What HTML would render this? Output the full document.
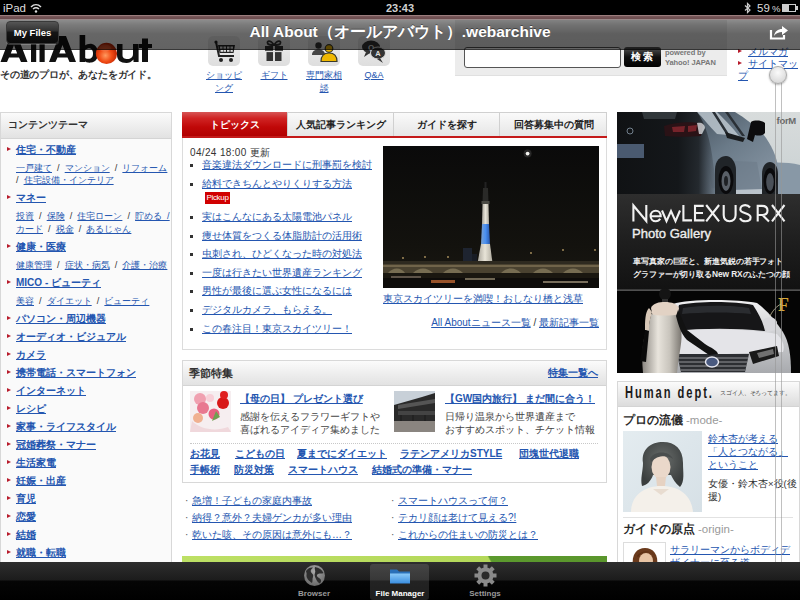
<!DOCTYPE html>
<html><head><meta charset="utf-8">
<style>
*{margin:0;padding:0;box-sizing:border-box}
html,body{width:800px;height:600px;overflow:hidden;background:#fff;font-family:"Liberation Sans",sans-serif;position:relative}
.a{position:absolute;white-space:nowrap}
a,.l{color:#2456b0;text-decoration:underline}
.b{font-weight:bold}
/* status bar */
#status{left:0;top:0;width:800px;height:16px;background:#000;color:#ddd;font-size:12px}
#nav{left:0;top:15px;width:800px;height:34px;background:linear-gradient(#9a8080 0,#8a6c6c 2px,#8d8d8d 4px,#7a7a7a 14px,#6c6c6c 22px,#656565 33px);opacity:0.97}
#tabbar{left:0;top:562px;width:800px;height:38px;background:linear-gradient(#2a2a2a,#151515 18px,#000 19px,#000)}
.box{position:absolute;border:1px solid #d8d8d8;background:#fff}
.hdr{position:absolute;left:0;top:0;right:0;background:linear-gradient(#fbfbfb,#e2e2e2);border-bottom:1px solid #d4d4d4}
.tri{position:absolute;width:0;height:0;border-top:2.5px solid transparent;border-bottom:2.5px solid transparent;border-left:4px solid #b81c2c}
.lc{font-size:11px;line-height:14px}
.lc .b{font-size:11.5px}
.sq{position:absolute;width:3px;height:3px;background:#333}
</style></head><body>

<!-- ===== page content ===== -->
<!-- logo -->
<svg class="a" style="left:0;top:30px" width="160" height="36" viewBox="0 30 160 36">
  <defs><radialGradient id="ball" cx="0.45" cy="0.6" r="0.6"><stop offset="0" stop-color="#ff9a60"/><stop offset="0.5" stop-color="#f04a14"/><stop offset="1" stop-color="#b82000"/></radialGradient></defs>
  <g fill="#111">
    <path d="M0.5 62 L10.5 36 L17.5 36 L27.5 62 L21 62 L19 57.5 L9 57.5 L7 62 Z M10.8 53.5 L17.2 53.5 L14 45 Z" fill-rule="evenodd"/>
    <rect x="31" y="35" width="5.2" height="27"/>
    <rect x="39.5" y="35" width="5.2" height="27"/>
    <path d="M49 62 L59 36 L66 36 L76 62 L69.5 62 L67.5 57.5 L57.5 57.5 L55.5 62 Z M59.3 53.5 L65.7 53.5 L62.5 45 Z" fill-rule="evenodd"/>
    <rect x="79.6" y="35" width="5.6" height="27"/>
    <path d="M84 46 C87 44 90 43.5 92 44 C96 45 98 49 98 53.5 C98 58 96 62 91 62.6 C88 63 86 62 84 61 Z M85 50 L85 58 C87 59 89 59 90.5 58.5 C92.5 57.5 93 55.5 93 53.5 C93 51.5 92.5 49.5 90.5 48.5 C89 48 87 48.5 85 50Z" fill-rule="evenodd"/>
    <path d="M117 44 L122.5 44 L122.5 55 C122.5 58 124.5 59 127.5 59 C130.5 59 133 57.5 133 54 L133 44 L138.6 44 L138.6 62 L133.5 62 L133.5 59.5 C131.5 62 129 63 126.5 63 C120.5 63 117 60 117 55 Z"/>
    <path d="M142 38.4 L148 38.4 L148 44 L152 44 L152 48 L148 48 L148 62 L142 62 L142 48 L139 48 L139 44 L142 44Z"/>
  </g>
  <circle cx="106.5" cy="53.4" r="10.6" fill="url(#ball)"/>
  <ellipse cx="105" cy="48" rx="6" ry="3.5" fill="#fff" opacity="0.12"/>
</svg>
<div class="a b" style="left:0;top:68px;font-size:10px;color:#333;letter-spacing:-0.2px">その道のプロが、あなたをガイド。</div>


<!-- header icons -->
<div class="a" style="left:208px;top:36px;width:32px;height:30px;border-radius:5px;background:linear-gradient(#eeeeee,#dedede)"></div>
<div class="a" style="left:258px;top:36px;width:32px;height:30px;border-radius:5px;background:linear-gradient(#eeeeee,#dedede)"></div>
<div class="a" style="left:308px;top:36px;width:32px;height:30px;border-radius:5px;background:linear-gradient(#eeeeee,#dedede)"></div>
<div class="a" style="left:358px;top:36px;width:32px;height:30px;border-radius:5px;background:linear-gradient(#eeeeee,#dedede)"></div>
<!-- cart -->
<svg class="a" style="left:208px;top:36px" width="32" height="30" viewBox="0 0 32 30">
  <circle cx="8" cy="6" r="1.6" fill="#222"/>
  <path d="M8 6 L11 20 L26 20" stroke="#222" stroke-width="2" fill="none"/>
  <path d="M10 9 L27 9 L25.5 17 L11.5 17 Z" fill="#222"/>
  <g fill="#ddd"><rect x="12" y="10.5" width="2.5" height="2.2"/><rect x="15.5" y="10.5" width="2.5" height="2.2"/><rect x="19" y="10.5" width="2.5" height="2.2"/><rect x="22.5" y="10.5" width="2.5" height="2.2"/>
  <rect x="12.5" y="13.8" width="2.5" height="2"/><rect x="15.5" y="13.8" width="2.5" height="2"/><rect x="19" y="13.8" width="2.5" height="2"/><rect x="22.5" y="13.8" width="2.3" height="2"/></g>
  <circle cx="13" cy="24" r="2" fill="#222"/><circle cx="23" cy="24" r="2" fill="#222"/>
</svg>
<!-- gift -->
<svg class="a" style="left:258px;top:36px" width="32" height="30" viewBox="0 0 32 30">
  <path d="M16 9 C12 3 8 5 10 8 C11 9 14 9 16 9 C18 9 21 9 22 8 C24 5 20 3 16 9Z" fill="none" stroke="#333" stroke-width="1.8"/>
  <rect x="7" y="10" width="18" height="5" fill="#333"/>
  <rect x="8.5" y="16" width="15" height="9" fill="#333"/>
  <rect x="15" y="10" width="2" height="15" fill="#ddd"/>
  <rect x="7" y="14.8" width="18" height="1.3" fill="#ddd"/>
</svg>
<!-- people -->
<svg class="a" style="left:308px;top:36px" width="32" height="30" viewBox="0 0 32 30">
  <circle cx="10.5" cy="9.5" r="3.2" fill="#333"/>
  <path d="M4 19 C4 15 7 13.5 10.5 13.5 C14 13.5 17 15 17 19Z" fill="#444"/>
  <circle cx="21" cy="12.5" r="3.8" fill="#f0b800" stroke="#3a3a2a" stroke-width="1.2"/>
  <path d="M13 25.5 C13 20 16 17 21 17 C26 17 29 20 29 25.5Z" fill="#f0b800" stroke="#3a3a2a" stroke-width="1.2"/>
</svg>
<!-- Q&A -->
<svg class="a" style="left:358px;top:36px" width="32" height="30" viewBox="0 0 32 30">
  <ellipse cx="13" cy="11" rx="9" ry="6.5" fill="#333"/>
  <path d="M8 16 L6 21 L12 17Z" fill="#333"/>
  <text x="13" y="14" font-size="8" font-weight="bold" fill="#ddd" text-anchor="middle" font-family="Liberation Sans">Q</text>
  <ellipse cx="20" cy="17" rx="7.5" ry="6" fill="#333" stroke="#ddd" stroke-width="1"/>
  <path d="M22 22 L25 27 L19 23Z" fill="#333"/>
  <text x="20" y="20" font-size="7.5" font-weight="bold" fill="#ddd" text-anchor="middle" font-family="Liberation Sans">A</text>
</svg>
<div class="a l" style="left:204px;top:69px;width:40px;text-align:center;font-size:9px;line-height:13px;white-space:normal">ショッピ<br>ング</div>
<div class="a l" style="left:254px;top:69px;width:40px;text-align:center;font-size:9px;line-height:13px">ギフト</div>
<div class="a l" style="left:304px;top:69px;width:40px;text-align:center;font-size:9px;line-height:13px;white-space:normal">専門家相<br>談</div>
<div class="a l" style="left:354px;top:69px;width:40px;text-align:center;font-size:9px;line-height:13px">Q&amp;A</div>

<!-- search panel -->
<div class="a" style="left:455px;top:20px;width:272px;height:56px;background:#ececec;border-bottom:1px solid #e0e0e0"></div>
<div class="a" style="left:464px;top:47px;width:157px;height:21px;background:#fff;border:1px solid #555;border-radius:3px"></div>
<div class="a b" style="left:624px;top:47px;width:37px;height:20px;background:linear-gradient(#555,#111 50%,#000);border-radius:3px;color:#fff;font-size:10px;line-height:20px;text-align:center;letter-spacing:2px">検索</div>
<div class="a b" style="left:665px;top:48px;font-size:7.5px;line-height:10px;color:#777;letter-spacing:-0.1px">powered by<br>Yahoo! JAPAN</div>
<!-- side links -->
<div class="tri" style="left:738px;top:49px"></div>
<div class="a l" style="left:748px;top:45px;font-size:9.5px;line-height:13px">メルマガ</div>
<div class="tri" style="left:738px;top:61px"></div>
<div class="a l" style="left:748px;top:57px;font-size:9.5px;line-height:13px">サイトマッ</div>
<div class="a l" style="left:738px;top:69px;font-size:9.5px;line-height:13px">プ</div>

<!-- left sidebar -->
<div class="box" style="left:0;top:112px;width:172px;height:460px;background:#fafafa;border-color:#d8d8d8"><div class="hdr" style="height:26px"></div></div>
<div class="a b" style="left:8px;top:118px;font-size:10px;line-height:14px;color:#333">コンテンツテーマ</div>
<div class="tri" style="left:7px;top:147px"></div>
<div class="a l b" style="left:16px;top:143px;font-size:10px;line-height:14px">住宅・不動産</div>
<div class="a" style="left:16px;top:161px;font-size:9.2px;line-height:14px;color:#333;word-spacing:2.5px"><span class="l">一戸建て</span> <span style="color:#333">/</span> <span class="l">マンション</span> <span style="color:#333">/</span> <span class="l">リフォーム</span></div>
<div class="a" style="left:16px;top:173px;font-size:9.2px;line-height:14px;color:#333;word-spacing:2.5px"><span style="color:#333">/ </span><span class="l">住宅設備・インテリア</span></div>
<div class="tri" style="left:7px;top:195px"></div>
<div class="a l b" style="left:16px;top:191px;font-size:10px;line-height:14px">マネー</div>
<div class="a" style="left:16px;top:209px;font-size:9.2px;line-height:14px;color:#333;word-spacing:2.5px"><span class="l">投資</span> <span style="color:#333">/</span> <span class="l">保険</span> <span style="color:#333">/</span> <span class="l">住宅ローン</span> <span style="color:#333">/</span> <span class="l">貯める /</span></div>
<div class="a" style="left:16px;top:222px;font-size:9.2px;line-height:14px;color:#333;word-spacing:2.5px"><span class="l">カード</span> <span style="color:#333">/</span> <span class="l">税金</span> <span style="color:#333">/</span> <span class="l">あるじゃん</span></div>
<div class="tri" style="left:7px;top:244px"></div>
<div class="a l b" style="left:16px;top:240px;font-size:10px;line-height:14px">健康・医療</div>
<div class="a" style="left:16px;top:258px;font-size:9.2px;line-height:14px;color:#333;word-spacing:2.5px"><span class="l">健康管理</span> <span style="color:#333">/</span> <span class="l">症状・病気</span> <span style="color:#333">/</span> <span class="l">介護・治療</span></div>
<div class="tri" style="left:7px;top:280px"></div>
<div class="a l b" style="left:16px;top:276px;font-size:10px;line-height:14px">MICO - ビューティ</div>
<div class="a" style="left:16px;top:294px;font-size:9.2px;line-height:14px;color:#333;word-spacing:2.5px"><span class="l">美容</span> <span style="color:#333">/</span> <span class="l">ダイエット</span> <span style="color:#333">/</span> <span class="l">ビューティ</span></div>
<div class="tri" style="left:7px;top:316px"></div>
<div class="a l b" style="left:16px;top:312px;font-size:10px;line-height:14px">パソコン・周辺機器</div>
<div class="tri" style="left:7px;top:334px"></div>
<div class="a l b" style="left:16px;top:330px;font-size:10px;line-height:14px">オーディオ・ビジュアル</div>
<div class="tri" style="left:7px;top:352px"></div>
<div class="a l b" style="left:16px;top:348px;font-size:10px;line-height:14px">カメラ</div>
<div class="tri" style="left:7px;top:370px"></div>
<div class="a l b" style="left:16px;top:366px;font-size:10px;line-height:14px">携帯電話・スマートフォン</div>
<div class="tri" style="left:7px;top:388px"></div>
<div class="a l b" style="left:16px;top:384px;font-size:10px;line-height:14px">インターネット</div>
<div class="tri" style="left:7px;top:406px"></div>
<div class="a l b" style="left:16px;top:402px;font-size:10px;line-height:14px">レシピ</div>
<div class="tri" style="left:7px;top:424px"></div>
<div class="a l b" style="left:16px;top:420px;font-size:10px;line-height:14px">家事・ライフスタイル</div>
<div class="tri" style="left:7px;top:442px"></div>
<div class="a l b" style="left:16px;top:438px;font-size:10px;line-height:14px">冠婚葬祭・マナー</div>
<div class="tri" style="left:7px;top:460px"></div>
<div class="a l b" style="left:16px;top:456px;font-size:10px;line-height:14px">生活家電</div>
<div class="tri" style="left:7px;top:478px"></div>
<div class="a l b" style="left:16px;top:474px;font-size:10px;line-height:14px">妊娠・出産</div>
<div class="tri" style="left:7px;top:496px"></div>
<div class="a l b" style="left:16px;top:492px;font-size:10px;line-height:14px">育児</div>
<div class="tri" style="left:7px;top:514px"></div>
<div class="a l b" style="left:16px;top:510px;font-size:10px;line-height:14px">恋愛</div>
<div class="tri" style="left:7px;top:532px"></div>
<div class="a l b" style="left:16px;top:528px;font-size:10px;line-height:14px">結婚</div>
<div class="tri" style="left:7px;top:550px"></div>
<div class="a l b" style="left:16px;top:546px;font-size:10px;line-height:14px">就職・転職</div>
<!-- main topics box -->
<div class="box" style="left:182px;top:112px;width:425px;height:238px;border-color:#dcdcdc"></div>
<div class="a" style="left:182px;top:112px;width:425px;height:24px;background:linear-gradient(#fafafa,#e6e6e6);border:1px solid #d0d0d0;border-bottom:none"></div>
<div class="a b" style="left:182px;top:112px;width:105px;height:25px;background:linear-gradient(#d65656 0,#d02424 25%,#c00808 60%,#b00000 100%);color:#fff;font-size:10px;line-height:25px;text-align:center">トピックス</div>
<div class="a" style="left:287px;top:112px;width:1px;height:24px;background:#d0d0d0"></div>
<div class="a b" style="left:288px;top:112px;width:105px;height:24px;color:#222;font-size:10px;line-height:25px;text-align:center">人気記事ランキング</div>
<div class="a" style="left:393px;top:112px;width:1px;height:24px;background:#d0d0d0"></div>
<div class="a b" style="left:394px;top:112px;width:106px;height:24px;color:#222;font-size:10px;line-height:25px;text-align:center">ガイドを探す</div>
<div class="a" style="left:499px;top:112px;width:1px;height:24px;background:#d0d0d0"></div>
<div class="a b" style="left:500px;top:112px;width:107px;height:24px;color:#222;font-size:10px;line-height:25px;text-align:center">回答募集中の質問</div>
<div class="a" style="left:182px;top:136px;width:425px;height:2px;background:#c41a1a"></div>
<div class="a" style="left:190px;top:146px;font-size:10px;line-height:13px;color:#333;letter-spacing:0.35px">04/24 18:00 更新</div>

<div class="sq" style="left:190px;top:164px"></div>
<div class="a l" style="left:202px;top:158px;font-size:10px;line-height:14px">音楽違法ダウンロードに刑事罰を検討</div>
<div class="sq" style="left:190px;top:183px"></div>
<div class="a l" style="left:202px;top:177px;font-size:10px;line-height:14px">給料できちんとやりくりする方法</div>
<div class="sq" style="left:190px;top:216px"></div>
<div class="a l" style="left:202px;top:210px;font-size:10px;line-height:14px">実はこんなにある太陽電池パネル</div>
<div class="sq" style="left:190px;top:235px"></div>
<div class="a l" style="left:202px;top:229px;font-size:10px;line-height:14px">痩せ体質をつくる体脂肪計の活用術</div>
<div class="sq" style="left:190px;top:253px"></div>
<div class="a l" style="left:202px;top:247px;font-size:10px;line-height:14px">虫刺され、ひどくなった時の対処法</div>
<div class="sq" style="left:190px;top:272px"></div>
<div class="a l" style="left:202px;top:266px;font-size:10px;line-height:14px">一度は行きたい世界遺産ランキング</div>
<div class="sq" style="left:190px;top:290px"></div>
<div class="a l" style="left:202px;top:284px;font-size:10px;line-height:14px">男性が最後に選ぶ女性になるには</div>
<div class="sq" style="left:190px;top:309px"></div>
<div class="a l" style="left:202px;top:303px;font-size:10px;line-height:14px">デジタルカメラ、もらえる。</div>
<div class="sq" style="left:190px;top:328px"></div>
<div class="a l" style="left:202px;top:322px;font-size:10px;line-height:14px">この春注目！東京スカイツリー！</div>
<div class="a" style="left:205px;top:192px;width:25px;height:12px;background:#d10000;color:#fff;font-size:8px;line-height:12px;text-align:center;letter-spacing:-0.3px">Pickup</div>
<!-- skytree photo -->
<svg class="a" style="left:383px;top:146px" width="216" height="142" viewBox="0 0 216 142">
  <defs>
    <linearGradient id="sky" x1="0" y1="0" x2="0" y2="1"><stop offset="0" stop-color="#0a0a0a"/><stop offset="0.7" stop-color="#13120e"/><stop offset="1" stop-color="#1a1812"/></linearGradient>
    <linearGradient id="tw" x1="0" y1="0" x2="1" y2="0"><stop offset="0" stop-color="#7aa0d0"/><stop offset="0.5" stop-color="#4a90f0"/><stop offset="1" stop-color="#2a5ab0"/></linearGradient>
    <linearGradient id="twl" x1="0" y1="0" x2="1" y2="0"><stop offset="0" stop-color="#a8a49a"/><stop offset="0.5" stop-color="#e8e4d8"/><stop offset="1" stop-color="#b0aca0"/></linearGradient>
  </defs>
  <rect width="216" height="142" fill="url(#sky)"/>
  <circle cx="144.6" cy="7.6" r="4" fill="#fff" opacity="0.12"/>
  <circle cx="144.6" cy="7.6" r="1.9" fill="#f4f4f0"/>
  <rect x="101.5" y="36" width="2" height="6" fill="#222"/>
  <path d="M100 42 L105 42 L105.5 56 L99.5 56 Z" fill="#2a2a28"/>
  <rect x="98.5" y="55" width="8" height="3" fill="#4a4a44"/>
  <path d="M99.5 58 L105.5 58 L106 78 L99 78Z" fill="url(#twl)"/>
  <path d="M99 78 L106 78 L107 98 L98 98Z" fill="url(#tw)"/>
  <path d="M98 98 L107 98 L109.5 117 L94.5 117Z" fill="url(#twl)"/>
  <rect x="80" y="102" width="9" height="15" fill="#1e2430"/>
  <rect x="89" y="108" width="5" height="9" fill="#181c24"/>
  <rect x="0" y="115" width="216" height="4" fill="#2e2a20"/>
  <rect x="0" y="118" width="216" height="9" fill="#4a4230"/>
  <rect x="0" y="119" width="216" height="2" fill="#8a7c5c" opacity="0.6"/>
  <g fill="#e0d0a0" opacity="0.3">
    <path d="M5 127 C10 121 18 121 22 127Z"/><path d="M30 127 C36 121 44 121 50 127Z"/><path d="M60 127 C66 121 74 121 80 127Z"/><path d="M118 127 C124 121 132 121 138 127Z"/><path d="M150 127 C156 121 164 121 170 127Z"/><path d="M180 127 C186 121 194 121 200 127Z"/>
  </g>
  <rect x="0" y="127" width="216" height="5" fill="#1a1710"/>
  <rect x="0" y="132" width="216" height="10" fill="#0e0c0a"/>
  <rect x="48" y="134" width="24" height="3" fill="#b06030" opacity="0.85"/>
  <rect x="82" y="132" width="30" height="2" fill="#c0b090" opacity="0.55"/>
  <rect x="160" y="135" width="45" height="2" fill="#d0c0a0" opacity="0.55"/>
  <rect x="8" y="130" width="30" height="2" fill="#a09080" opacity="0.5"/>
  <g fill="#d8b878" opacity="0.8"><circle cx="20" cy="112" r="0.9"/><circle cx="42" cy="111" r="0.9"/><circle cx="65" cy="111" r="0.9"/><circle cx="148" cy="107" r="0.9"/><circle cx="180" cy="104" r="0.9"/><circle cx="212" cy="104" r="0.9"/></g>
</svg>
<div class="a l" style="left:383px;top:292px;font-size:10px;line-height:14px">東京スカイツリーを満喫！おしなり橋と浅草</div>
<div class="a" style="left:383px;top:316px;width:216px;text-align:right;font-size:10px;line-height:14px;color:#333"><span class="l">All Aboutニュース一覧</span> / <span class="l">最新記事一覧</span></div>

<!-- seasonal box -->
<div class="box" style="left:182px;top:360px;width:425px;height:123px;border-color:#d8d8d8"><div class="hdr" style="height:25px"></div></div>
<div class="a b" style="left:189px;top:366px;font-size:11px;line-height:14px;color:#333">季節特集</div>
<div class="a l b" style="left:598px;top:366px;transform:translateX(-100%);font-size:10px;line-height:14px">特集一覧へ</div>
<svg class="a" style="left:190px;top:391px" width="41" height="41" viewBox="0 0 41 41">
  <rect width="41" height="41" fill="#f6eef0"/>
  <path d="M2 30 C10 38 25 41 38 36 L41 41 L0 41Z" fill="#f0d8dc"/>
  <circle cx="10" cy="8" r="6" fill="#f0a0b0"/><circle cx="13" cy="17" r="6" fill="#e87890"/>
  <circle cx="24" cy="23" r="5.5" fill="#e86080"/><circle cx="33" cy="12" r="6" fill="#d81818"/>
  <circle cx="34" cy="4" r="4" fill="#e02020"/><circle cx="8" cy="27" r="5" fill="#f0b090"/>
  <circle cx="20" cy="7" r="4" fill="#f8d0d8"/><path d="M26 20 L30 26 L22 30Z" fill="#70a050"/>
</svg>
<div class="a l b" style="left:240px;top:392px;font-size:10px;line-height:14px">【母の日】 プレゼント選び</div>
<div class="a" style="left:240px;top:410px;font-size:10px;line-height:13px;color:#444">感謝を伝えるフラワーギフトや<br>喜ばれるアイディア集めました</div>
<svg class="a" style="left:394px;top:391px" width="41" height="41" viewBox="0 0 41 41">
  <rect width="41" height="41" fill="#b8c0c8"/>
  <rect y="0" width="41" height="14" fill="#c8d0d8"/>
  <path d="M0 14 L28 6 L41 2 L41 30 L0 30Z" fill="#2a2a2a"/>
  <path d="M4 14 L41 8 L41 12 L4 18Z" fill="#555"/>
  <rect x="4" y="20" width="37" height="4" fill="#444"/>
  <rect x="0" y="30" width="41" height="11" fill="#8a8580"/>
  <rect x="6" y="24" width="2" height="6" fill="#222"/><rect x="18" y="24" width="2" height="6" fill="#222"/><rect x="30" y="24" width="2" height="6" fill="#222"/>
</svg>
<div class="a l b" style="left:445px;top:392px;font-size:10px;line-height:14px">【GW国内旅行】 まだ間に合う！</div>
<div class="a" style="left:445px;top:410px;font-size:10px;line-height:13px;color:#444">日帰り温泉から世界遺産まで<br>おすすめスポット、チケット情報</div>
<div class="a" style="left:190px;top:443px;width:408px;height:0;border-top:1px dotted #c8c8c8"></div>
<div class="a l b" style="left:190px;top:447px;font-size:10px;line-height:14px">お花見</div>
<div class="a l b" style="left:235px;top:447px;font-size:10px;line-height:14px">こどもの日</div>
<div class="a l b" style="left:297px;top:447px;font-size:10px;line-height:14px">夏までにダイエット</div>
<div class="a l b" style="left:400px;top:447px;font-size:10px;line-height:14px">ラテンアメリカSTYLE</div>
<div class="a l b" style="left:519px;top:447px;font-size:10px;line-height:14px">団塊世代退職</div>
<div class="a l b" style="left:190px;top:463px;font-size:10px;line-height:14px">手帳術</div>
<div class="a l b" style="left:234px;top:463px;font-size:10px;line-height:14px">防災対策</div>
<div class="a l b" style="left:288px;top:463px;font-size:10px;line-height:14px">スマートハウス</div>
<div class="a l b" style="left:372px;top:463px;font-size:10px;line-height:14px">結婚式の準備・マナー</div>

<div class="a" style="left:185px;top:494px;font-size:10px;line-height:14px;color:#555">·</div>
<div class="a l" style="left:192px;top:494px;font-size:10px;line-height:14px">急増！子どもの家庭内事故</div>
<div class="a" style="left:185px;top:511px;font-size:10px;line-height:14px;color:#555">·</div>
<div class="a l" style="left:192px;top:511px;font-size:10px;line-height:14px">納得？意外？夫婦ゲンカが多い理由</div>
<div class="a" style="left:185px;top:528px;font-size:10px;line-height:14px;color:#555">·</div>
<div class="a l" style="left:192px;top:528px;font-size:10px;line-height:14px">乾いた咳、その原因は意外にも…？</div>
<div class="a" style="left:391px;top:494px;font-size:10px;line-height:14px;color:#555">·</div>
<div class="a l" style="left:398px;top:494px;font-size:10px;line-height:14px">スマートハウスって何？</div>
<div class="a" style="left:391px;top:511px;font-size:10px;line-height:14px;color:#555">·</div>
<div class="a l" style="left:398px;top:511px;font-size:10px;line-height:14px">テカリ顔は老けて見える?!</div>
<div class="a" style="left:391px;top:528px;font-size:10px;line-height:14px;color:#555">·</div>
<div class="a l" style="left:398px;top:528px;font-size:10px;line-height:14px">これからの住まいの防災とは？</div>
<div class="a" style="left:182px;top:556px;width:425px;height:6px;background:linear-gradient(62deg,#bde065 0,#b4d85a 72%,#5c9a2e 72.4%,#5a962c 100%)"></div>
<!-- right column: lexus ad -->
<svg class="a" style="left:617px;top:112px" width="183" height="261" viewBox="0 0 183 261">
  <defs>
    <linearGradient id="skyr" x1="0" y1="0" x2="0" y2="1"><stop offset="0" stop-color="#d8dcdc"/><stop offset="0.6" stop-color="#cfd5d6"/><stop offset="1" stop-color="#b8c2c6"/></linearGradient>
    <linearGradient id="carside" x1="0" y1="0" x2="1" y2="1"><stop offset="0" stop-color="#3e4a56"/><stop offset="0.45" stop-color="#6a7a88"/><stop offset="1" stop-color="#8e9caa"/></linearGradient><filter id="blr" x="-10%" y="-10%" width="120%" height="120%"><feGaussianBlur stdDeviation="2.5"/></filter><linearGradient id="carrear" x1="0" y1="0" x2="1" y2="0"><stop offset="0" stop-color="#101214"/><stop offset="0.6" stop-color="#14171a"/><stop offset="0.8" stop-color="#1c2024" stop-opacity="0.9"/><stop offset="1" stop-color="#2a3038" stop-opacity="0"/></linearGradient><linearGradient id="carbody" x1="0" y1="0" x2="1" y2="0"><stop offset="0" stop-color="#121416"/><stop offset="0.4" stop-color="#1e2226"/><stop offset="0.55" stop-color="#4a5460"/><stop offset="0.8" stop-color="#7a8894"/><stop offset="1" stop-color="#8a98a2"/></linearGradient>
    <linearGradient id="band" x1="0" y1="0" x2="0" y2="1"><stop offset="0" stop-color="#2e2e2e"/><stop offset="0.5" stop-color="#1e1e1e"/><stop offset="1" stop-color="#121212"/></linearGradient>
    <linearGradient id="hood" x1="0" y1="0" x2="0" y2="1"><stop offset="0" stop-color="#f0f0f2"/><stop offset="1" stop-color="#a8aaae"/></linearGradient>
    <linearGradient id="dress" x1="0" y1="0" x2="1" y2="0"><stop offset="0" stop-color="#8a8680"/><stop offset="0.4" stop-color="#e8e4dc"/><stop offset="0.7" stop-color="#c8c4bc"/><stop offset="1" stop-color="#7a7670"/></linearGradient>
  </defs>
  <!-- top car photo -->
  <rect width="183" height="82" fill="url(#skyr)"/>
  <path d="M140 82 L140 52 C155 50 170 50 183 53 L183 82Z" fill="#8898a6"/>
  <!-- car side body -->
  <path d="M60 0 L118 0 C128 6 138 14 146 22 C154 32 160 44 162 60 L162 82 L60 82Z" fill="url(#carside)"/>
  <path d="M80 0 L100 0 C108 8 116 16 122 24 L100 22 C92 14 86 6 80 0Z" fill="#c0cad2" opacity="0.8"/>
  <path d="M95 0 L98 0 L112 22 L109 22Z M108 0 L111 0 L128 24 L125 24Z" fill="#2a3036"/>
  <path d="M90 48 L140 50 L145 78 L95 76Z" fill="#6a7886" opacity="0.5"/>
  <!-- dark rear -->
  <path d="M0 0 L80 0 C88 10 94 30 96 50 C98 65 100 75 102 82 L0 82Z" fill="url(#carrear)"/>
  <path d="M25 0 L60 0 L58 7 L27 7Z" fill="#3a4044" opacity="0.8"/>
  <path d="M47 14 C58 10 75 9 86 12 L84 24 C72 25 58 25 48 24Z" fill="#2a1216"/>
  <path d="M55 15 L68 14 L67 20 L56 20Z M71 14 L80 13 L79 19 L71 20Z" fill="#8a2830" opacity="0.8"/>
  <path d="M80 11 C84 10 88 12 88 16 L85 22 L82 22Z" fill="#d8dce0" opacity="0.8"/>
  <rect x="0" y="32" width="27" height="14" fill="#4a5a70"/>
  <circle cx="13" cy="19" r="3" fill="none" stroke="#8a9aaa" stroke-width="0.8"/>
  <!-- mirror -->
  <path d="M134 10 C137 8 145 8 148 11 L148 21 C146 24 141 24 138 23 L136 30 L130 27Z" fill="#0c0c0e"/>
  <path d="M108 20 L128 26 L126 30 L110 26Z" fill="#1a1c1e"/>
  <!-- wheels -->
  <path d="M98 82 L98 58 C98 48 104 44 109 44 C114 44 119 50 119 58 L119 82Z" fill="#202428"/>
  <ellipse cx="109" cy="68" rx="7.5" ry="14" fill="#0a0a0c"/>
  <ellipse cx="109" cy="69" rx="4.5" ry="10" fill="#5a6068"/>
  <ellipse cx="109" cy="69" rx="2" ry="5" fill="#1e2024"/>
  <path d="M145 82 L145 62 C145 54 149 50 153 50 C157 50 161 54 161 62 L161 82Z" fill="#202428"/>
  <ellipse cx="153" cy="69" rx="6.5" ry="13" fill="#0a0a0c"/>
  <ellipse cx="153" cy="70" rx="3.8" ry="9" fill="#4a5058"/>
  <path d="M119 78 L145 77 L145 82 L119 82Z" fill="#c8d0d6" opacity="0.8"/>
  <text x="179" y="12" font-size="9.5" font-weight="bold" fill="#6a6a6a" text-anchor="end" font-family="Liberation Sans" letter-spacing="-0.3">forM</text>
  <!-- band -->
  <rect y="82" width="183" height="96" fill="url(#band)"/>
  <g fill="none" stroke="#f2f2f2" stroke-width="2.1" stroke-linejoin="miter">
    <path d="M16.4 109.4 V93.5 L29.3 109 V93"/>
    <path d="M33.8 104.2 H43.7 C43.7 100.8 41.5 98.7 38.8 98.7 C35.8 98.7 33.6 101 33.6 104 C33.6 107 35.8 109.3 38.8 109.3 C40.8 109.3 42.3 108.3 43.2 106.8"/>
    <path d="M45 98.5 L49.5 109.2 L54 99 L58.5 109.2 L63 98.5"/>
    <path d="M66.4 93 V108.4 H75"/>
    <path d="M86.7 93.9 H78 V108.4 H87.5 M78 101 H86"/>
    <path d="M89.2 93 L102.1 109.4 M102.1 93 L89.2 109.4"/>
    <path d="M106.7 93 V103 C106.7 106.8 109 109.2 112.6 109.2 C116.2 109.2 118.6 106.8 118.6 103 V93"/>
    <path d="M133 95.5 C131.8 93.9 130.2 93.1 128.2 93.1 C125.2 93.1 123.3 95 123.3 97.4 C123.3 101.8 133.6 100.6 133.6 105.2 C133.6 107.8 131.6 109.3 128.4 109.3 C125.9 109.3 124 108.1 122.9 106.2"/>
    <path d="M140.7 109.4 V93.9 H145 C148.7 93.9 150.5 95.9 150.5 98.5 C150.5 101.1 148.7 103 145 103 H140.7 M145.5 103 L152 109.4"/>
    <path d="M155 93 L167.5 109.4 M167.5 93 L155 109.4"/>
  </g>
  <text x="15" y="126.4" font-size="12.5" fill="#eee" stroke="#eee" stroke-width="0.35" font-family="Liberation Sans" textLength="79" lengthAdjust="spacingAndGlyphs">Photo Gallery</text>
  <rect y="177" width="183" height="1.5" fill="#3a3a3a"/>
  <!-- lower photo -->
  <rect y="178.5" width="183" height="82.5" fill="#050505"/>
  <g transform="translate(0,178)">
    <path d="M56 14 C70 9 120 9 140 13 C150 20 158 30 166 42 C172 52 174 65 174 83 L50 83 C48 60 50 30 56 14Z" fill="url(#hood)"/>
    <path d="M62 15 C80 11 118 11 136 15 C142 24 146 32 148 41 C120 38 85 38 58 41 C58 30 60 22 62 15Z" fill="#161618"/>
    <path d="M66 18 C85 15 115 15 132 18 L134 24 C115 22 85 22 65 24Z" fill="#2a2c30"/>
    <path d="M50 42 C80 38 130 38 160 44 C166 50 168 56 166 62 L50 66Z" fill="#e4e4e8"/>
    <path d="M146 30 C150 26 158 26 160 32 L159 40 L150 42Z" fill="#d8d8dc"/>
    <path d="M60 64 L132 64 L128 82 L64 82Z" fill="#2c2e32"/>
    <g stroke="#a0a2a6" stroke-width="0.9"><line x1="61" y1="68" x2="131" y2="68"/><line x1="62" y1="72" x2="130" y2="72"/><line x1="63" y1="76" x2="129" y2="76"/><line x1="64" y1="80" x2="128" y2="80"/></g>
    <ellipse cx="95" cy="72" rx="6.5" ry="5" fill="#4a5a80" stroke="#e8e8f0" stroke-width="1.4"/>
    <path d="M132 62 L160 56 L162 66 L136 74Z" fill="#1a1a1a"/>
    <path d="M140 63 L156 59 L157 64 L142 68Z" fill="#707070"/>
    <!-- lady -->
    <ellipse cx="48" cy="4" rx="6" ry="6" fill="#141414"/>
    <rect x="45" y="9" width="6" height="3" fill="#333"/>
    <path d="M34 18 C36 13 42 12 48 12 C55 12 60 14 62 18 L60 28 L36 28Z" fill="#e2d2c4"/>
    <path d="M34 24 C40 26 56 26 62 24 L64 40 C66 50 62 62 60 83 L26 83 C24 62 26 45 32 35Z" fill="url(#dress)"/>
    <path d="M32 18 C28 22 28 32 28 40 L32 40 C32 32 34 26 35 22Z" fill="#d8c8b8"/>
    <path d="M28 40 L32 41 L29 72 L23 71Z" fill="#0a0a0a"/>
    <path d="M61 20 C64 26 67 34 70 40 L88 54 C94 58 100 60 101 64 L92 65 L70 50 C64 44 61 34 59 26Z" fill="#121212"/>
  </g>
  <text x="161" y="199" font-size="18" fill="#d8a838" font-family="Liberation Serif" font-weight="bold">F</text>
  <path d="M153 204 C156 198 160 194 164 192" stroke="#c8c0a0" stroke-width="0.8" fill="none"/>
</svg>
<div class="a b" style="left:633px;top:255px;font-size:8.4px;line-height:12.6px;color:#eee;letter-spacing:-0.1px">車写真家の巨匠と、新進気鋭の若手フォト<br>グラファーが切り取るNew RXのふたつの顔</div>

<!-- human dept -->
<div class="box" style="left:617px;top:381px;width:183px;height:200px;border-color:#d8d8d8"><div class="hdr" style="height:25px;background:linear-gradient(#fbfbfb,#dcdcdc)"></div></div>
<div class="a b" style="left:625px;top:383px;font-size:17px;line-height:20px;color:#1a1a1a;transform:scaleX(0.654);transform-origin:left top;letter-spacing:3px">Human dept.</div>
<div class="a" style="left:720px;top:388px;font-size:6.3px;line-height:10px;color:#444;letter-spacing:-0.1px">スゴイ人、そろってます。</div>
<div class="a b" style="left:623px;top:412px;font-size:12px;line-height:16px;color:#2a2a2a;font-family:'Liberation Serif',serif">プロの流儀 <span style="font-family:'Liberation Sans',sans-serif;font-weight:normal;color:#9a9a9a;font-size:11.5px">-mode-</span></div>
<svg class="a" style="left:623px;top:431px" width="79" height="81" viewBox="0 0 79 81">
  <defs><linearGradient id="pbg" x1="0" y1="0" x2="1" y2="1"><stop offset="0" stop-color="#e4ecf0"/><stop offset="1" stop-color="#d6e0e6"/></linearGradient>
  <radialGradient id="hair" cx="0.5" cy="0.4" r="0.6"><stop offset="0" stop-color="#6a6e6c"/><stop offset="1" stop-color="#3a3e3e"/></radialGradient></defs>
  <rect width="79" height="81" fill="url(#pbg)"/>
  <path d="M20 32 C18 18 28 11 40 11 C52 11 60 18 60 32 C60 42 62 50 57 56 C52 52 50 48 48 44 L30 44 C28 50 24 54 19 55 C17 48 20 40 20 32Z" fill="url(#hair)"/>
  <ellipse cx="38" cy="36" rx="9.5" ry="12" fill="#ead8ca"/>
  <path d="M27 28 C30 20 46 19 50 28 C45 24 34 24 28 31Z" fill="#4a4e4e"/>
  <path d="M33 46 L43 46 L42 55 L34 55Z" fill="#e6d2c2"/>
  <path d="M8 81 C8 64 22 55 38 55 C54 55 68 62 70 81Z" fill="#f4f0ea"/>
  <path d="M30 58 L46 58 L38 64Z" fill="#e8dcd0"/>
</svg>
<div class="a l" style="left:708px;top:432px;font-size:10px;line-height:13px">鈴木杏が考える<br>「人とつながる」<br>ということ</div>
<div class="a" style="left:708px;top:477px;font-size:9.5px;line-height:13px;color:#333">女優・鈴木杏×役(後<br>援)</div>
<div class="a" style="left:623px;top:517px;width:170px;height:1px;background:#e2e2e2"></div>
<div class="a b" style="left:623px;top:521px;font-size:12px;line-height:16px;color:#2a2a2a;font-family:'Liberation Serif',serif">ガイドの原点 <span style="font-family:'Liberation Sans',sans-serif;font-weight:normal;color:#9a9a9a;font-size:11.5px">-origin-</span></div>
<svg class="a" style="left:623px;top:542px" width="43" height="25" viewBox="0 0 43 25">
  <rect x="0.5" y="0.5" width="42" height="24" fill="#fff" stroke="#ddd"/>
  <path d="M10 25 C8 12 14 6 22 6 C30 6 36 12 34 25Z" fill="#6a3a1c"/>
  <ellipse cx="23" cy="19" rx="7" ry="8" fill="#e8c4a4"/>
  <path d="M14 14 C18 8 28 8 32 14 L30 12 C26 9 18 9 15 15Z" fill="#5a2c10"/>
</svg>
<div class="a l" style="left:670px;top:543px;font-size:10px;line-height:13px">サラリーマンからボディデ<br>ザイナーに至る道</div>

<!-- ===== overlays ===== -->
<div class="a" style="left:0;top:15px;width:800px;height:34px;background:linear-gradient(#9a7c7c 0,#9a7c7c 1px,#7a5a5c 1px,#6e4e50 3px,#6e4e50 4px,#988888 4px,#988888 5px,transparent 5px)"></div>
<div class="a" style="left:0;top:20px;width:800px;height:29px;background:linear-gradient(rgba(0,0,0,0.45) 0,rgba(0,0,0,0.52) 5px,rgba(0,0,0,0.6) 14px,rgba(0,0,0,0.61) 29px)"></div>
<div class="a" style="left:0;top:49px;width:800px;height:1px;background:rgba(0,0,0,0.78)"></div>
<div class="a" style="left:0;top:0;width:800px;height:15px;background:#000"></div>
<div class="a" style="left:3px;top:1px;font-size:11.5px;line-height:14px;color:#ddd">iPad</div>
<svg class="a" style="left:30px;top:3px" width="12" height="10" viewBox="0 0 12 10"><path d="M1 4 C4 1 8 1 11 4" stroke="#ddd" stroke-width="1.5" fill="none"/><path d="M3 6 C5 4.3 7 4.3 9 6" stroke="#ddd" stroke-width="1.5" fill="none"/><circle cx="6" cy="8.5" r="1.2" fill="#ddd"/></svg>
<div class="a b" style="left:0;top:1px;width:800px;text-align:center;font-size:11px;line-height:14px;color:#d0d0d0">23:43</div>
<svg class="a" style="left:744px;top:2px" width="8" height="12" viewBox="0 0 8 12"><path d="M1 3.5 L6 8 L3.5 10.5 L3.5 1.5 L6 4 L1 8.5" stroke="#ccc" stroke-width="1.2" fill="none"/></svg>
<div class="a" style="left:757px;top:1px;font-size:11.5px;line-height:14px;color:#ddd">59</div>
<div class="a" style="left:772px;top:2px;font-size:9.5px;line-height:13px;color:#ddd">%</div>
<div class="a" style="left:782px;top:4px;width:14px;height:8px;border:1px solid #ccc"><div style="width:6px;height:6px;background:#ccc"></div></div>
<div class="a" style="left:796px;top:6px;width:2px;height:4px;background:#ccc"></div>
<!-- My Files button -->
<div class="a b" style="left:6px;top:21px;width:53px;height:23px;border-radius:4px;background:linear-gradient(#555 0,#333 40%,#151515 50%,#0a0a0a 100%);border:1px solid #3a3a3a;box-shadow:0 1px 0 rgba(255,255,255,0.2);color:#fff;font-size:9.5px;line-height:21px;text-align:center">My Files</div>
<div class="a b" style="left:0;top:22px;width:800px;text-align:center;font-size:15.5px;line-height:20px;color:#fff;text-shadow:0 -1px 0 rgba(0,0,0,0.4)">All About（オールアバウト）.webarchive</div>
<svg class="a" style="left:769px;top:24px" width="20" height="16" viewBox="0 0 20 16"><path d="M2 6 L2 14.5 L15 14.5 L15 11" stroke="#fff" stroke-width="2.2" fill="none"/><path d="M5 12 C6 7 9 5 13 5 L13 2 L19 6.5 L13 11 L13 8 C10 8 7 9 5 12Z" fill="#fff"/></svg>
<!-- slider -->
<div class="a" style="left:775px;top:80px;width:7px;height:482px;border-left:1px solid rgba(150,150,150,0.6);border-right:1px solid rgba(150,150,150,0.6)"></div>
<div class="a" style="left:769px;top:66px;width:18px;height:18px;border-radius:50%;background:radial-gradient(circle at 50% 35%,#fafafa,#d0d0d0);border:1px solid #aaa;box-shadow:0 1px 2px rgba(0,0,0,0.3)"></div>
<!-- bottom tab bar -->
<div class="a" style="left:0;top:562px;width:800px;height:38px;background:linear-gradient(#2e2e2e 0,#1c1c1c 18px,#050505 19px,#000 38px)"></div>
<div class="a" style="left:370px;top:564px;width:59px;height:36px;border-radius:3px;background:rgba(255,255,255,0.12)"></div>
<svg class="a" style="left:303px;top:564px" width="23" height="23" viewBox="0 0 23 23">
  <defs><radialGradient id="glb" cx="0.5" cy="0.3" r="0.7"><stop offset="0" stop-color="#a8a8a8"/><stop offset="1" stop-color="#6a6a6a"/></radialGradient></defs>
  <circle cx="11.5" cy="11.5" r="10.5" fill="url(#glb)"/>
  <path d="M3 7 C5 4 8 3 10 3.5 C9 5 7 6 8 8 C9 10 11 10 10 13 C9 15 10 17 9 19 C6 17 3 14 3.5 11 C4 9 3 8 3 7Z" fill="#2e2e2e"/>
  <path d="M12 3 C16 3.5 19 6 20.5 9 C19 10 17 9 15 10 C13 11 14 13 16 14 C18 15 19 17 17 19.5 C15 19 14 17 13 15 C12 13 11 11 12 9 C13 7 11 5 12 3Z" fill="#2e2e2e"/>
</svg>
<svg class="a" style="left:389px;top:568px" width="22" height="16" viewBox="0 0 22 16">
  <defs><linearGradient id="fld" x1="0" y1="0" x2="0" y2="1"><stop offset="0" stop-color="#8ccaf8"/><stop offset="1" stop-color="#3a8ee0"/></linearGradient></defs>
  <path d="M1 1.5 L8 1.5 L10 3.5 L21 3.5 L21 15 L1 15Z" fill="#2a70b8"/>
  <path d="M1 5.5 L21 5.5 L21 15.5 L1 15.5Z" fill="url(#fld)"/>
</svg>
<svg class="a" style="left:474px;top:564px" width="23" height="23" viewBox="0 0 23 23">
  <g fill="#8a8a8a"><circle cx="11.5" cy="11.5" r="8"/>
  <g><rect x="9.5" y="0.5" width="4" height="5"/><rect x="9.5" y="17.5" width="4" height="5"/><rect x="0.5" y="9.5" width="5" height="4"/><rect x="17.5" y="9.5" width="5" height="4"/></g>
  <g transform="rotate(45 11.5 11.5)"><rect x="9.5" y="0.5" width="4" height="5"/><rect x="9.5" y="17.5" width="4" height="5"/><rect x="0.5" y="9.5" width="5" height="4"/><rect x="17.5" y="9.5" width="5" height="4"/></g></g>
  <circle cx="11.5" cy="11.5" r="4" fill="#2a2a2a"/>
</svg>
<div class="a b" style="left:264px;top:589px;width:100px;text-align:center;font-size:8px;line-height:10px;color:#9a9a9a">Browser</div>
<div class="a b" style="left:350px;top:589px;width:100px;text-align:center;font-size:8px;line-height:10px;color:#fff">File Manager</div>
<div class="a b" style="left:435px;top:589px;width:100px;text-align:center;font-size:8px;line-height:10px;color:#9a9a9a">Settings</div>

</body></html>
